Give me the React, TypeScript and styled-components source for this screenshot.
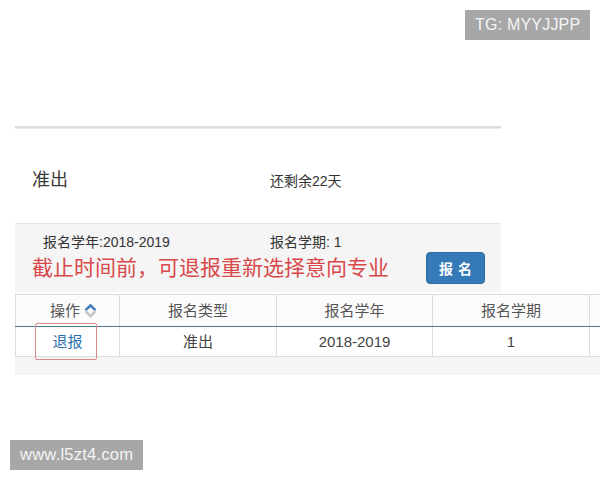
import React from "react";
import styled, { createGlobalStyle } from "styled-components";

const Global = createGlobalStyle`
  html, body { margin: 0; padding: 0; background: #fff; }
  body {
    font-family: "Liberation Sans", "Noto Sans CJK SC", sans-serif;
    color: #333;
    width: 600px;
    height: 480px;
    overflow: hidden;
  }
`;

const Page = styled.div`
  position: relative;
  width: 600px;
  height: 480px;
  overflow: hidden;
  padding-top: 126px;
  box-sizing: border-box;
`;

const Badge = styled.div<{ $top: number; $left: number; $size: number }>`
  position: absolute;
  top: ${(p) => p.$top}px;
  left: ${(p) => p.$left}px;
  background: #a7a7a7;
  color: #f4f4f4;
  font-family: "Liberation Sans", sans-serif;
  font-size: ${(p) => p.$size}px;
  line-height: 30px;
  padding: 0 10px;
  letter-spacing: 0.2px;
`;

const Divider = styled.div`
  margin-left: 15px;
  width: 486px;
  height: 2px;
  background: #dcdcdc;
  border-bottom: 1px solid #ececec;
`;

const TitleRow = styled.div`
  display: flex;
  align-items: baseline;
  padding-left: 32px;
  margin-top: 39px;
  height: 55px;
`;

const Title = styled.div`
  font-size: 18px;
  line-height: 24px;
  width: 238px;
  color: #3a3a3a;
`;

const Remain = styled.div`
  font-size: 14px;
  color: #333;
`;

const Panel = styled.div`
  margin-left: 15px;
  width: 486px;
  height: 69px;
  background: #f5f5f5;
  border-top: 1px solid #e4e4e4;
  box-sizing: border-box;
  padding: 9px 0 0 17px;
`;

const InfoRow = styled.div`
  display: flex;
  font-size: 14px;
  line-height: 18px;
  color: #333;
  margin-left: 11px;
`;

const InfoItem = styled.div<{ $w?: number }>`
  width: ${(p) => (p.$w ? `${p.$w}px` : "auto")};
`;

const ActionRow = styled.div`
  display: flex;
  align-items: center;
`;

const Warning = styled.div`
  font-size: 21px;
  line-height: 27px;
  color: #d9484a;
  width: 394px;
`;

const Button = styled.button`
  width: 59px;
  height: 32px;
  background: #337ab7;
  border: 1px solid #2e6da4;
  border-radius: 4px;
  color: #fff;
  font-family: "Noto Sans CJK SC", sans-serif;
  font-size: 14px;
  font-weight: bold;
  letter-spacing: 5px;
  padding: 0 0 0 5px;
  margin-top: 1px;
`;

const TableWrap = styled.div`
  margin-left: 15px;
  margin-top: 2px;
  width: 600px;
  background: #f5f5f5;
  padding-bottom: 18px;
`;

const Table = styled.table`
  border-collapse: collapse;
  table-layout: fixed;
  width: 620px;
  background: #fff;
  font-size: 15px;
`;

const Th = styled.th<{ $w?: number }>`
  ${(p) => (p.$w ? `width: ${p.$w}px;` : "")}
  height: 31px;
  padding: 0;
  font-weight: normal;
  color: #555;
  border: 1px solid #ddd;
  border-bottom: 1px solid #4b7890;
  text-align: center;
  background: #fcfcfc;
  line-height: 18px;
`;

const Td = styled.td`
  height: 29px;
  padding: 0;
  border: 1px solid #ddd;
  border-top: none;
  text-align: center;
  color: #444;
  line-height: 18px;
  position: relative;
`;

const HeadInner = styled.span`
  display: inline-flex;
  align-items: center;
  gap: 4px;
  margin-left: 12px;
`;

const LinkText = styled.a`
  color: #2a6fad;
  text-decoration: none;
`;

const Highlight = styled.div`
  position: absolute;
  left: 19px;
  top: -4px;
  width: 62px;
  height: 37px;
  border: 1.5px solid #d98a8f;
  border-radius: 2px;
  box-sizing: border-box;
`;

const SortIcon = () => (
  <svg width="13" height="17" viewBox="0 0 13 17">
    <path d="M6.5 1.5 L12.5 7.5 L10.5 9 L6.5 5.2 L2.5 9 L0.5 7.5 Z" fill="#3f7fbf" />
    <path d="M6.5 16 L12.5 10 L10.5 8.6 L6.5 12.3 L2.5 8.6 L0.5 10 Z" fill="#c6c6c6" />
  </svg>
);

export default function App() {
  return (
    <>
      <Global />
      <Page>
        <Badge $top={10} $left={465} $size={16}>TG: MYYJJPP</Badge>
        <Divider />
        <TitleRow>
          <Title>准出</Title>
          <Remain>还剩余22天</Remain>
        </TitleRow>
        <Panel>
          <InfoRow>
            <InfoItem $w={227}>报名学年:2018-2019</InfoItem>
            <InfoItem>报名学期: 1</InfoItem>
          </InfoRow>
          <ActionRow>
            <Warning>截止时间前，可退报重新选择意向专业</Warning>
            <Button>报名</Button>
          </ActionRow>
        </Panel>
        <TableWrap>
          <Table>
            <thead>
              <tr>
                <Th $w={103}>
                  <HeadInner>
                    操作
                    <SortIcon />
                  </HeadInner>
                </Th>
                <Th $w={156}>报名类型</Th>
                <Th $w={155}>报名学年</Th>
                <Th $w={156}>报名学期</Th>
                <Th></Th>
              </tr>
            </thead>
            <tbody>
              <tr>
                <Td>
                  <Highlight />
                  <LinkText>退报</LinkText>
                </Td>
                <Td>准出</Td>
                <Td>2018-2019</Td>
                <Td>1</Td>
                <Td></Td>
              </tr>
            </tbody>
          </Table>
        </TableWrap>
        <Badge $top={440} $left={10} $size={16.6}>www.l5zt4.com</Badge>
      </Page>
    </>
  );
}
